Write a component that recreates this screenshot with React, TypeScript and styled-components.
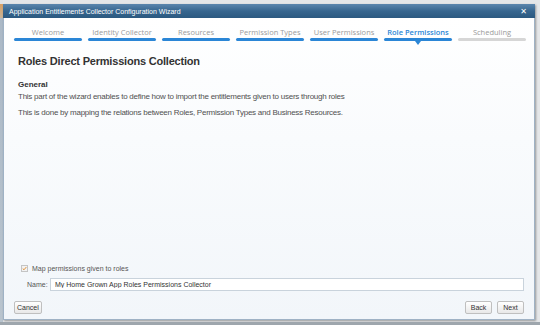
import React from 'react';
import styled, { createGlobalStyle } from 'styled-components';

type StepState = 'done' | 'active' | 'todo';

const steps: Array<{ label: string; state: StepState }> = [
  { label: 'Welcome', state: 'done' },
  { label: 'Identity Collector', state: 'done' },
  { label: 'Resources', state: 'done' },
  { label: 'Permission Types', state: 'done' },
  { label: 'User Permissions', state: 'done' },
  { label: 'Role Permissions', state: 'active' },
  { label: 'Scheduling', state: 'todo' },
];

function App(): React.ReactElement {
  return (
    <>
      <GlobalStyle />
      <Backdrop>
        <Dialog>
          <TitleBar>
            <TitleText>Application Entitlements Collector Configuration Wizard</TitleText>
            <CloseButton>✕</CloseButton>
          </TitleBar>
          <Body>
            <Steps>
              {steps.map((step) => (
                <Step key={step.label}>
                  <StepLabel $state={step.state}>{step.label}</StepLabel>
                  <StepBar $state={step.state} />
                  {step.state === 'active' && <StepArrow />}
                </Step>
              ))}
            </Steps>

            <Content>
              <Heading>Roles Direct Permissions Collection</Heading>
              <SectionTitle>General</SectionTitle>
              <Paragraph>
                This part of the wizard enables to define how to import the entitlements given to users through roles
              </Paragraph>
              <Paragraph>
                This is done by mapping the relations between Roles, Permission Types and Business Resources.
              </Paragraph>
            </Content>

            <Options>
              <CheckRow>
                <CheckBox>
                  <svg width="7" height="7" viewBox="0 0 7 7">
                    <path d="M1 3.6 L2.8 5.3 L6 1.5" fill="none" stroke="#e08a2a" strokeWidth="1.3" />
                  </svg>
                </CheckBox>
                <span>Map permissions given to roles</span>
              </CheckRow>
              <FieldRow>
                <FieldLabel>Name:</FieldLabel>
                <TextInput defaultValue="My Home Grown App Roles Permissions Collector" />
              </FieldRow>
            </Options>

            <Footer>
              <Button>Cancel</Button>
              <ButtonGroup>
                <Button>Back</Button>
                <Button>Next</Button>
              </ButtonGroup>
            </Footer>
          </Body>
        </Dialog>
      </Backdrop>
    </>
  );
}

const GlobalStyle = createGlobalStyle`
  html, body {
    margin: 0;
    padding: 0;
    background: #cfd3d6;
  }
  * {
    box-sizing: border-box;
  }
`;

const Backdrop = styled.div`
  width: 540px;
  height: 325px;
  padding: 4px 5px 5px 3px;
  background:
    linear-gradient(to bottom, #e2e4e6 0, #e2e4e6 4px, #d9a063 4px, #c7b49a 18px, transparent 18px) left top / 3px 100% no-repeat,
    linear-gradient(to bottom, #aab8c6, #b9c4ce) left top / 3px 100% no-repeat,
    #e4e6e8;
  border-bottom: 3px solid #9ea6ad;
  overflow: hidden;
`;

const Dialog = styled.div`
  width: 532px;
  height: 316px;
  display: flex;
  flex-direction: column;
  box-shadow: 1px 1px 2px rgba(0, 0, 0, 0.35);
`;

const TitleBar = styled.div`
  height: 14px;
  display: flex;
  align-items: center;
  justify-content: space-between;
  padding: 0 6px 0 6px;
  background: linear-gradient(to bottom, #5b86ad 0%, #37668f 50%, #2b5980 100%);
`;

const TitleText = styled.span`
  font-family: 'Liberation Sans', Arial, sans-serif;
  font-size: 7px;
  color: #ffffff;
`;

const CloseButton = styled.span`
  font-family: 'DejaVu Sans', sans-serif;
  font-size: 8px;
  font-weight: bold;
  color: #ffffff;
  margin-right: 2px;
`;

const Body = styled.div`
  flex: 1;
  display: flex;
  flex-direction: column;
  padding: 9px 10px 5px 10px;
  border: 1px solid #9fb2c5;
  border-top: none;
  background: linear-gradient(to bottom, #ffffff 0%, #f9fbfd 40%, #f2f6fa 100%);
`;

const Steps = styled.div`
  display: grid;
  grid-template-columns: repeat(7, 68px);
  gap: 6px;
`;

const Step = styled.div`
  position: relative;
  display: flex;
  flex-direction: column;
  align-items: center;
  gap: 1px;
`;

const StepLabel = styled.span<{ $state: StepState }>`
  font-family: 'Open Sans', sans-serif;
  font-size: 7.5px;
  line-height: 10px;
  font-weight: ${({ $state }) => ($state === 'active' ? 600 : 400)};
  color: ${({ $state }) => ($state === 'active' ? '#2b86d6' : '#9a9a9a')};
  white-space: nowrap;
`;

const StepBar = styled.div<{ $state: StepState }>`
  width: 100%;
  height: 3px;
  border-radius: 2px;
  background: ${({ $state }) => ($state === 'todo' ? '#d6d6d6' : '#2b86d6')};
`;

const StepArrow = styled.div`
  position: absolute;
  left: 50%;
  bottom: -4px;
  margin-left: -3px;
  width: 0;
  height: 0;
  border-left: 3px solid transparent;
  border-right: 3px solid transparent;
  border-top: 4px solid #2b86d6;
`;

const Content = styled.div`
  flex: 1;
  padding: 14px 0 0 4px;
  font-family: 'Liberation Sans', Arial, sans-serif;
  color: #444444;
`;

const Heading = styled.h1`
  margin: 0 0 12px 0;
  font-size: 11px;
  line-height: 13px;
  letter-spacing: -0.2px;
  font-weight: bold;
  color: #333333;
`;

const SectionTitle = styled.div`
  font-size: 8px;
  line-height: 10px;
  font-weight: bold;
  color: #333333;
  margin-bottom: 2px;
`;

const Paragraph = styled.p`
  margin: 0 0 6px 0;
  font-size: 8px;
  line-height: 10px;
  letter-spacing: -0.25px;
  color: #505050;
`;

const Options = styled.div`
  display: flex;
  flex-direction: column;
  gap: 6px;
  padding: 0 0 0 6px;
  font-family: 'Liberation Sans', Arial, sans-serif;
  font-size: 7px;
  color: #555555;
`;

const CheckRow = styled.div`
  display: flex;
  align-items: center;
  gap: 4px;
  padding-left: 1px;
`;

const CheckBox = styled.span`
  width: 7px;
  height: 7px;
  display: flex;
  align-items: center;
  justify-content: center;
  border: 1px solid #c4c4c4;
  background: #f2f2f2;
`;

const FieldRow = styled.div`
  display: flex;
  align-items: center;
  gap: 3px;
  padding-left: 7px;
`;

const FieldLabel = styled.span`
  width: 20px;
`;

const TextInput = styled.input`
  flex: 1;
  height: 13px;
  padding: 0 4px;
  border: 1px solid #c9d3dc;
  background: #ffffff;
  font-family: 'Liberation Sans', Arial, sans-serif;
  font-size: 7px;
  color: #333333;
  outline: none;
`;

const Footer = styled.div`
  display: flex;
  justify-content: space-between;
  align-items: center;
  margin-top: 10px;
`;

const ButtonGroup = styled.div`
  display: flex;
  gap: 5px;
`;

const Button = styled.button`
  height: 13px;
  padding: 0 2px;
  min-width: 27px;
  border: 1px solid #bfbfbf;
  border-radius: 2px;
  background: linear-gradient(to bottom, #ffffff, #e8e8e8);
  font-family: 'Liberation Sans', Arial, sans-serif;
  font-size: 7px;
  color: #333333;
  line-height: 11px;
`;

export default App;
